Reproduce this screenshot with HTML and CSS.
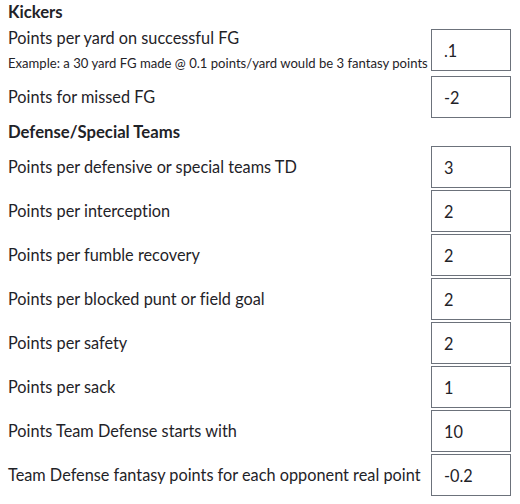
FILE: index.html
```html
<!DOCTYPE html>
<html lang="en">
<head>
<meta charset="utf-8">
<title>Scoring settings</title>
<link rel="stylesheet" href="styles.css">
</head>
<body>
<form class="scoring">
  <div class="section-title section-title--first">Kickers</div>
  <div class="row row--tall">
    <div class="label">
      <div>Points per yard on successful FG</div>
      <div class="hint">Example: a 30 yard FG made @ 0.1 points/yard would be 3 fantasy points</div>
    </div>
    <input class="num" type="text" value=".1">
  </div>
  <div class="row">
    <div class="label">Points for missed FG</div>
    <input class="num" type="text" value="-2">
  </div>
  <div class="section-title">Defense/Special Teams</div>
  <div class="row">
    <div class="label">Points per defensive or special teams TD</div>
    <input class="num" type="text" value="3">
  </div>
  <div class="row">
    <div class="label">Points per interception</div>
    <input class="num" type="text" value="2">
  </div>
  <div class="row">
    <div class="label">Points per fumble recovery</div>
    <input class="num" type="text" value="2">
  </div>
  <div class="row">
    <div class="label">Points per blocked punt or field goal</div>
    <input class="num" type="text" value="2">
  </div>
  <div class="row">
    <div class="label">Points per safety</div>
    <input class="num" type="text" value="2">
  </div>
  <div class="row">
    <div class="label">Points per sack</div>
    <input class="num" type="text" value="1">
  </div>
  <div class="row">
    <div class="label">Points Team Defense starts with</div>
    <input class="num" type="text" value="10">
  </div>
  <div class="row">
    <div class="label">Team Defense fantasy points for each opponent real point</div>
    <input class="num" type="text" value="-0.2">
  </div>
</form>
</body>
</html>
```
FILE: styles.css
```css
html, body {
  margin: 0;
  padding: 0;
  background: #ffffff;
}
body {
  font-family: Lato, "Liberation Sans", sans-serif;
  font-variant-ligatures: none;
  color: #1f2328;
  padding-left: 8px;
}
.scoring {
  width: 503px;
  display: flex;
  flex-direction: column;
  gap: 2px;
  margin: 0;
}
.section-title {
  font-weight: 700;
  font-size: 16.7px;
  line-height: 24px;
  height: 24px;
}
.section-title--first {
  height: 27px;
}
.row {
  display: flex;
  align-items: center;
  height: 42px;
}
.row--tall {
  height: 45px;
  align-items: flex-start;
}
.label {
  flex: 1;
  font-size: 16.3px;
  line-height: 18px;
}
.hint {
  font-size: 13.1px;
  line-height: 18px;
  margin-top: 7px;
}
.num {
  box-sizing: border-box;
  width: 80px;
  height: 42px;
  margin: 0;
  border: 1px solid #6c727b;
  border-radius: 0;
  padding: 0 12px;
  font-family: Lato, "Liberation Sans", sans-serif;
  font-variant-ligatures: none;
  font-size: 16.3px;
  color: #1f2328;
  background: #ffffff;
  outline: none;
}
```
